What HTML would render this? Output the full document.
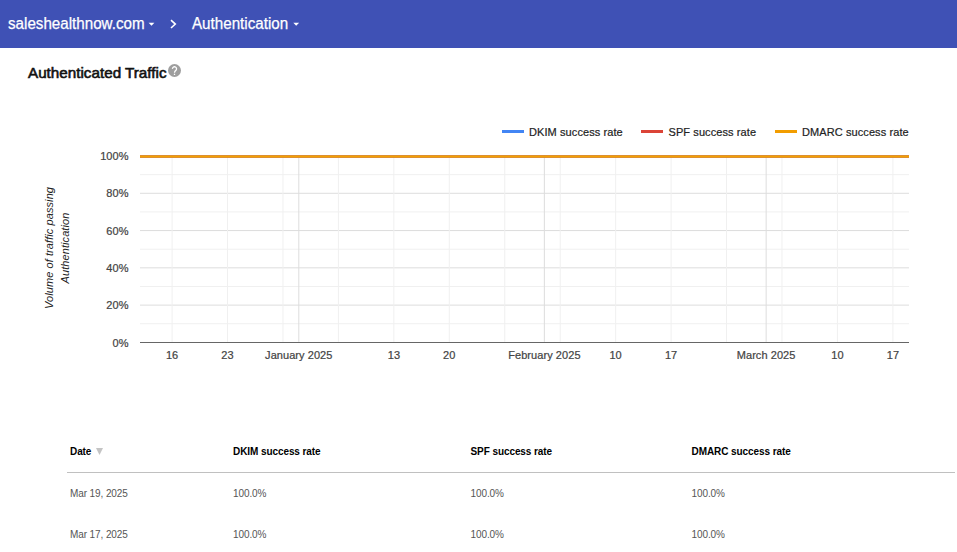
<!DOCTYPE html>
<html><head><meta charset="utf-8">
<style>
html,body{margin:0;padding:0;}
body{width:957px;height:552px;overflow:hidden;background:#fff;position:relative;font-family:"Liberation Sans",sans-serif;}
.hdr{position:absolute;left:0;top:0;width:957px;height:48px;background:#3f51b5;color:#fff;}
.hdr span{position:absolute;top:0;line-height:48px;font-size:16px;white-space:nowrap;transform:scaleX(0.948);transform-origin:0 0;-webkit-text-stroke:0.25px #fff;}
.tri{position:absolute;width:0;height:0;border-left:2.75px solid transparent;border-right:2.75px solid transparent;border-top:3px solid #fff;}
.title{position:absolute;left:27.5px;top:0;font-size:15px;color:#111;-webkit-text-stroke:0.6px #111;white-space:nowrap;transform:scaleX(1.015);transform-origin:0 0;}
.help{position:absolute;left:168px;top:64.8px;width:12.6px;height:12.6px;border-radius:50%;background:#9e9e9e;color:#fff;font-size:11px;font-weight:bold;text-align:center;line-height:13px;}
.chart{position:absolute;left:0;top:0;}
.tbl{position:absolute;font-size:10px;white-space:nowrap;}
.th{font-weight:bold;color:#000;letter-spacing:-0.08px;}
.td{color:#555;letter-spacing:-0.1px;}
.rule{position:absolute;left:67px;top:472px;width:888px;height:1px;background:#c0c0c0;}
</style></head><body>
<div class="hdr">
<span style="left:8px">saleshealthnow.com</span>
<svg style="position:absolute;left:146px;top:20px" width="12" height="8" viewBox="0 0 12 8"><path d="M2.6 2.7H8.4L5.5 5.8Z" fill="#fff"/></svg>
<svg style="position:absolute;left:169px;top:18px" width="10" height="12" viewBox="0 0 10 12"><path d="M2 2.2L6.3 6.1L2 10" fill="none" stroke="#fff" stroke-width="1.6"/></svg>
<span style="left:192px">Authentication</span>
<svg style="position:absolute;left:290px;top:20px" width="12" height="8" viewBox="0 0 12 8"><path d="M3.3 2.7H9.1L6.2 5.8Z" fill="#fff"/></svg>
</div>
<div class="title" style="top:64px">Authenticated Traffic</div>
<svg style="position:absolute;left:168px;top:63.8px" width="13" height="13" viewBox="0 0 13 13"><circle cx="6.5" cy="6.5" r="6.5" fill="#9e9e9e"/><path d="M4.45 4.9A2.05 2.05 0 1 1 8.1 6.1Q6.5 7.2 6.5 8.7" fill="none" stroke="#fff" stroke-width="1.3"/><rect x="5.85" y="9.7" width="1.3" height="1.3" fill="#fff"/></svg>
<svg class="chart" width="957" height="552" viewBox="0 0 957 552">
<g><rect x="140.0" y="323.24" width="769.0" height="1" fill="#f0f0f0"/><rect x="140.0" y="304.61" width="769.0" height="1" fill="#dddddd"/><rect x="140.0" y="285.97" width="769.0" height="1" fill="#f0f0f0"/><rect x="140.0" y="267.33" width="769.0" height="1" fill="#dddddd"/><rect x="140.0" y="248.69" width="769.0" height="1" fill="#f0f0f0"/><rect x="140.0" y="230.06" width="769.0" height="1" fill="#dddddd"/><rect x="140.0" y="211.42" width="769.0" height="1" fill="#f0f0f0"/><rect x="140.0" y="192.78" width="769.0" height="1" fill="#dddddd"/><rect x="140.0" y="174.15" width="769.0" height="1" fill="#f0f0f0"/><rect x="171.57" y="155.51" width="1" height="186.37" fill="#f0f0f0"/><rect x="227.02" y="155.51" width="1" height="186.37" fill="#f0f0f0"/><rect x="282.46" y="155.51" width="1" height="186.37" fill="#f0f0f0"/><rect x="337.91" y="155.51" width="1" height="186.37" fill="#f0f0f0"/><rect x="393.36" y="155.51" width="1" height="186.37" fill="#f0f0f0"/><rect x="448.81" y="155.51" width="1" height="186.37" fill="#f0f0f0"/><rect x="504.25" y="155.51" width="1" height="186.37" fill="#f0f0f0"/><rect x="559.70" y="155.51" width="1" height="186.37" fill="#f0f0f0"/><rect x="615.15" y="155.51" width="1" height="186.37" fill="#f0f0f0"/><rect x="670.59" y="155.51" width="1" height="186.37" fill="#f0f0f0"/><rect x="726.04" y="155.51" width="1" height="186.37" fill="#f0f0f0"/><rect x="781.49" y="155.51" width="1" height="186.37" fill="#f0f0f0"/><rect x="836.93" y="155.51" width="1" height="186.37" fill="#f0f0f0"/><rect x="892.38" y="155.51" width="1" height="186.37" fill="#f0f0f0"/><rect x="298.31" y="155.51" width="1" height="186.37" fill="#dddddd"/><rect x="543.86" y="155.51" width="1" height="186.37" fill="#dddddd"/><rect x="765.64" y="155.51" width="1" height="186.37" fill="#dddddd"/></g>
<rect x="140.0" y="342" width="769.0" height="1" fill="#666666"/>
<g fill="none" stroke-width="3">
<path d="M140.0 156.5H909.0" stroke="#4285f4" stroke-width="3.12" stroke-opacity="0.6"/>
<path d="M140.0 156.5H909.0" stroke="#db4437" stroke-width="3.12" stroke-opacity="0.6"/>
<path d="M140.0 156.5H909.0" stroke="#f2a100" stroke-width="3" stroke-opacity="0.62"/>
<path d="M140.0 156.5H909.0" stroke="#f2a100" stroke-width="1"/>
</g>
<g font-family="Liberation Sans" font-size="11" fill="#444444" stroke="#444444" stroke-width="0.22" letter-spacing="0.06"><text x="128.5" y="346.5" text-anchor="end">0%</text><text x="128.5" y="309.2" text-anchor="end">20%</text><text x="128.5" y="271.9" text-anchor="end">40%</text><text x="128.5" y="234.7" text-anchor="end">60%</text><text x="128.5" y="197.4" text-anchor="end">80%</text><text x="128.5" y="160.1" text-anchor="end">100%</text><text x="172.1" y="359" text-anchor="middle">16</text><text x="227.5" y="359" text-anchor="middle">23</text><text x="298.8" y="359" text-anchor="middle">January 2025</text><text x="393.9" y="359" text-anchor="middle">13</text><text x="449.3" y="359" text-anchor="middle">20</text><text x="544.4" y="359" text-anchor="middle">February 2025</text><text x="615.6" y="359" text-anchor="middle">10</text><text x="671.1" y="359" text-anchor="middle">17</text><text x="766.1" y="359" text-anchor="middle">March 2025</text><text x="837.4" y="359" text-anchor="middle">10</text><text x="892.9" y="359" text-anchor="middle">17</text></g>
<g font-family="Liberation Sans" font-size="11" fill="#222222" stroke="#222222" stroke-width="0.2" letter-spacing="0.09">
<rect x="502" y="130" width="22" height="3" fill="#4285f4" stroke="none"/>
<text x="529" y="136">DKIM success rate</text>
<rect x="641" y="130" width="22" height="3" fill="#db4437" stroke="none"/>
<text x="668.5" y="136">SPF success rate</text>
<rect x="775" y="130" width="22" height="3" fill="#f29d00" stroke="none"/>
<text x="802" y="136">DMARC success rate</text>
</g>
<g font-family="Liberation Sans" font-size="11" font-style="italic" fill="#222222" text-anchor="middle" letter-spacing="0.08">
<text transform="translate(53.4 248) rotate(-90)">Volume of traffic passing</text>
<text transform="translate(69.3 248) rotate(-90)">Authentication</text>
</g>
</svg>
<div class="tbl th" style="left:70px;top:446px">Date</div>
<svg style="position:absolute;left:95px;top:447px" width="9" height="9" viewBox="0 0 9 9"><path d="M1 1H8L4.5 8Z" fill="#c4c4c4"/></svg>
<div class="tbl th" style="left:233px;top:446px">DKIM success rate</div>
<div class="tbl th" style="left:470.5px;top:446px">SPF success rate</div>
<div class="tbl th" style="left:691.5px;top:446px">DMARC success rate</div>
<div class="rule"></div>
<div class="tbl td" style="left:70px;top:488px">Mar 19, 2025</div>
<div class="tbl td" style="left:233px;top:488px">100.0%</div>
<div class="tbl td" style="left:470.5px;top:488px">100.0%</div>
<div class="tbl td" style="left:691.5px;top:488px">100.0%</div>
<div class="tbl td" style="left:70px;top:529px">Mar 17, 2025</div>
<div class="tbl td" style="left:233px;top:529px">100.0%</div>
<div class="tbl td" style="left:470.5px;top:529px">100.0%</div>
<div class="tbl td" style="left:691.5px;top:529px">100.0%</div>
</body></html>
